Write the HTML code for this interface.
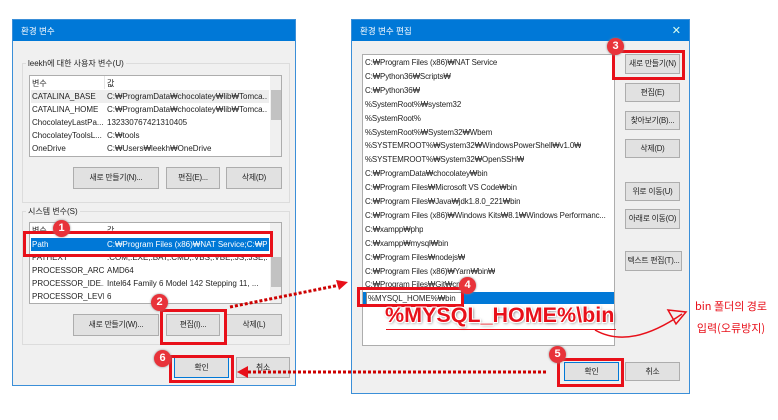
<!DOCTYPE html><html><head><meta charset="utf-8"><style>
*{margin:0;padding:0;box-sizing:border-box}
body{width:778px;height:420px;background:#fff;position:relative;overflow:hidden;font-family:"Liberation Sans","Noto Sans CJK KR",sans-serif;font-size:8px;color:#222}
.a{position:absolute}
.dlg{background:#f0f0f0;border:1px solid #3b8fd8}
.tb{background:#0078d7;color:#fff;font-size:8.5px;padding:5px 8px;height:21px}
.grp{border:1px solid #dcdcdc}
.lst{background:#fff;border:1px solid #adadad}
.btn{position:absolute;background:#e1e1e1;border:1px solid #adadad;text-align:center;font-size:7.8px;line-height:19px;white-space:nowrap;overflow:hidden;letter-spacing:-0.2px}
.row{position:absolute;left:2px;height:13px;line-height:13px;white-space:nowrap;overflow:hidden}
.n{width:72px}
.v{left:77px;width:160px}
.red{position:absolute;border:3px solid #e8101a}
.bd{position:absolute;width:17px;height:17px;border-radius:50%;background:#e8333a;color:#fff;font-size:11px;text-align:center;line-height:17px;font-weight:bold;box-shadow:0 0 2px #888}
.sb{position:absolute;background:#f0f0f0}
.r2 .row{font-size:7.9px;letter-spacing:-0.1px}
</style></head><body>
<div class="a dlg" style="left:12px;top:19px;width:284px;height:367px">
<div class="tb">환경 변수</div></div>
<div class="a grp" style="left:22px;top:63px;width:268px;height:140px"></div>
<div class="a" style="left:26px;top:58px;background:#f0f0f0;padding:0 2px">leekh에 대한 사용자 변수(U)</div>
<div class="a lst" style="left:29px;top:75px;width:253px;height:82px;overflow:hidden">
<div class="row n" style="top:1px">변수</div><div class="row v" style="top:1px">값</div>
<div class="a" style="left:74px;top:0;width:1px;height:13px;background:#e5e5e5"></div>
<div class="a" style="top:14px;background:#eee;width:238px;left:1px;height:13px"></div>
<div class="row n" style="top:14px">CATALINA_BASE</div><div class="row v" style="top:14px">C:₩ProgramData₩chocolatey₩lib₩Tomca...</div>
<div class="row n" style="top:27px">CATALINA_HOME</div><div class="row v" style="top:27px">C:₩ProgramData₩chocolatey₩lib₩Tomca...</div>
<div class="row n" style="top:40px">ChocolateyLastPa...</div><div class="row v" style="top:40px">132330767421310405</div>
<div class="row n" style="top:53px">ChocolateyToolsL...</div><div class="row v" style="top:53px">C:₩tools</div>
<div class="row n" style="top:66px">OneDrive</div><div class="row v" style="top:66px">C:₩Users₩leekh₩OneDrive</div>
<div class="sb" style="left:240px;top:0;width:12px;height:80px"></div>
<div class="a" style="left:241px;top:14px;width:10px;height:30px;background:#c2c2c2"></div>
</div>
<div class="btn" style="left:73px;top:167px;width:86px;height:22px">새로 만들기(N)...</div>
<div class="btn" style="left:166px;top:167px;width:54px;height:22px">편집(E)...</div>
<div class="btn" style="left:226px;top:167px;width:56px;height:22px">삭제(D)</div>
<div class="a grp" style="left:22px;top:211px;width:268px;height:134px"></div>
<div class="a" style="left:26px;top:206px;background:#f0f0f0;padding:0 2px">시스템 변수(S)</div>
<div class="a lst" style="left:29px;top:222px;width:253px;height:82px;overflow:hidden">
<div class="row n" style="top:1px">변수</div><div class="row v" style="top:1px">값</div>
<div class="a" style="top:15px;background:#0078d7;width:238px;left:1px;height:13px"></div>
<div class="row n" style="top:15px;color:#fff">Path</div><div class="row v" style="top:15px;color:#fff">C:₩Program Files (x86)₩NAT Service;C:₩P...</div>
<div class="row n" style="top:28px">PATHEXT</div><div class="row v" style="top:28px">.COM;.EXE;.BAT;.CMD;.VBS;.VBE;.JS;.JSE;.W...</div>
<div class="row n" style="top:41px">PROCESSOR_ARC...</div><div class="row v" style="top:41px">AMD64</div>
<div class="row n" style="top:54px">PROCESSOR_IDE...</div><div class="row v" style="top:54px">Intel64 Family 6 Model 142 Stepping 11, ...</div>
<div class="row n" style="top:67px">PROCESSOR_LEVEL</div><div class="row v" style="top:67px">6</div>
<div class="sb" style="left:240px;top:0;width:12px;height:80px"></div>
<div class="a" style="left:241px;top:34px;width:10px;height:30px;background:#c2c2c2"></div>
</div>
<div class="btn" style="left:73px;top:314px;width:86px;height:22px">새로 만들기(W)...</div>
<div class="btn" style="left:166px;top:314px;width:54px;height:22px">편집(I)...</div>
<div class="btn" style="left:226px;top:314px;width:56px;height:22px">삭제(L)</div>
<div class="btn" style="left:174px;top:357px;width:55px;height:21px;border-color:#0078d7">확인</div>
<div class="btn" style="left:236px;top:357px;width:54px;height:21px">취소</div>
<div class="red" style="left:23px;top:231px;width:250px;height:26px"></div>
<div class="red" style="left:160px;top:309px;width:67px;height:36px"></div>
<div class="red" style="left:169px;top:355px;width:65px;height:28px"></div>
<div class="bd" style="left:53px;top:220px">1</div>
<div class="bd" style="left:151px;top:294px">2</div>
<div class="bd" style="left:154px;top:350px">6</div>

<div class="a dlg" style="left:351px;top:19px;width:339px;height:375px">
<div class="tb">환경 변수 편집<span style="position:absolute;right:8px;top:4px;font-size:11px;color:#dfe">✕</span></div></div>
<div class="a lst r2" style="left:362px;top:54px;width:253px;height:292px;overflow:hidden">
<div class="row" style="top:1px">C:₩Program Files (x86)₩NAT Service</div>
<div class="row" style="top:14.9px">C:₩Python36₩Scripts₩</div>
<div class="row" style="top:28.8px">C:₩Python36₩</div>
<div class="row" style="top:42.7px">%SystemRoot%₩system32</div>
<div class="row" style="top:56.6px">%SystemRoot%</div>
<div class="row" style="top:70.5px">%SystemRoot%₩System32₩Wbem</div>
<div class="row" style="top:84.4px">%SYSTEMROOT%₩System32₩WindowsPowerShell₩v1.0₩</div>
<div class="row" style="top:98.3px">%SYSTEMROOT%₩System32₩OpenSSH₩</div>
<div class="row" style="top:112.2px">C:₩ProgramData₩chocolatey₩bin</div>
<div class="row" style="top:126.1px">C:₩Program Files₩Microsoft VS Code₩bin</div>
<div class="row" style="top:140px">C:₩Program Files₩Java₩jdk1.8.0_221₩bin</div>
<div class="row" style="top:153.9px;width:248px">C:₩Program Files (x86)₩Windows Kits₩8.1₩Windows Performanc...</div>
<div class="row" style="top:167.8px">C:₩xampp₩php</div>
<div class="row" style="top:181.7px">C:₩xampp₩mysql₩bin</div>
<div class="row" style="top:195.6px">C:₩Program Files₩nodejs₩</div>
<div class="row" style="top:209.5px">C:₩Program Files (x86)₩Yarn₩bin₩</div>
<div class="row" style="top:223.4px">C:₩Program Files₩Git₩cmd</div>
<div class="row" style="top:237.3px">%M2_HOME%₩bin</div>
<div class="a" style="left:0;top:237px;width:251px;height:12px;background:#0078d7"></div>
<div class="a" style="left:3px;top:237px;width:96px;height:13px;background:#fff;border:1px solid #888;line-height:11px;padding-left:1px;font-size:7.9px">%MYSQL_HOME%₩bin</div>
</div>
<div class="btn" style="left:625px;top:54px;width:55px;height:20px;line-height:18px">새로 만들기(N)</div>
<div class="btn" style="left:625px;top:83px;width:55px;height:19px;line-height:17px">편집(E)</div>
<div class="btn" style="left:625px;top:111px;width:55px;height:19px;line-height:17px">찾아보기(B)...</div>
<div class="btn" style="left:625px;top:139px;width:55px;height:19px;line-height:17px">삭제(D)</div>
<div class="btn" style="left:625px;top:182px;width:55px;height:19px;line-height:17px">위로 이동(U)</div>
<div class="btn" style="left:625px;top:209px;width:55px;height:20px;line-height:18px">아래로 이동(O)</div>
<div class="btn" style="left:625px;top:251px;width:57px;height:20px;line-height:18px">텍스트 편집(T)...</div>
<div class="btn" style="left:564px;top:362px;width:55px;height:19px;line-height:17px;border-color:#0078d7">확인</div>
<div class="btn" style="left:625px;top:362px;width:55px;height:19px;line-height:17px">취소</div>
<div class="red" style="left:612px;top:50px;width:73px;height:30px"></div>
<div class="red" style="left:357px;top:287px;width:107px;height:20px"></div>
<div class="red" style="left:557px;top:358px;width:67px;height:29px"></div>
<div class="bd" style="left:607px;top:38px">3</div>
<div class="bd" style="left:459px;top:277px">4</div>
<div class="bd" style="left:549px;top:346px">5</div>
<div class="a" style="left:385px;top:303px;color:#e8101a;font-weight:bold;text-shadow:-1px -1px 0 #fff,1px -1px 0 #fff,-1px 1px 0 #fff,1px 1px 0 #fff,1px 1px 3px #555;font-family:'Liberation Sans',sans-serif;font-size:21.5px;white-space:nowrap">%MYSQL_HOME%\bin</div>
<div class="a" style="left:386px;top:329px;width:230px;height:1px;background:#e8101a"></div>
<div class="a" style="left:684px;top:295px;color:#e8101a;font-size:11px;line-height:22px;text-align:center;width:94px;font-family:'Noto Sans CJK KR',sans-serif;white-space:nowrap">bin 폴더의 경로<br>입력(오류방지)</div>
<svg class="a" style="left:0;top:0" width="778" height="420">
<path d="M595 330 Q630 350 682 314" fill="none" stroke="#e8101a" stroke-width="1.5"/>
<path d="M668 310 L686 312 L676 324 Z" fill="none" stroke="#e8101a" stroke-width="1.5"/>
<path d="M230 307 L340 285" stroke="#c00" stroke-width="3" stroke-dasharray="3 2"/>
<path d="M348 282 L336 280 L339 290 Z" fill="#e8101a"/>
<path d="M546 372 L246 372" stroke="#c00" stroke-width="3" stroke-dasharray="3 2"/>
<path d="M237 372 L248 366 L248 378 Z" fill="#e8101a"/>
</svg>
</body></html>
